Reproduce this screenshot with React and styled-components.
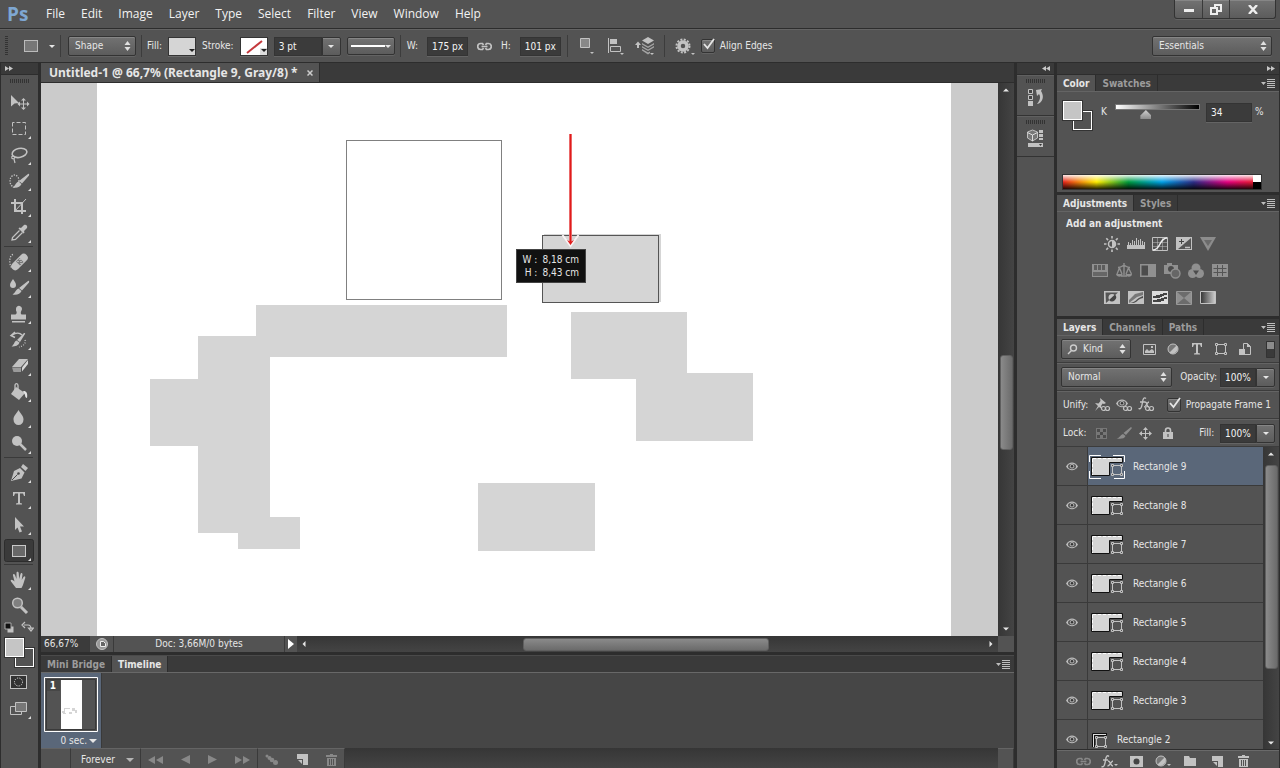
import React, { useState } from 'react';
import styled, { createGlobalStyle, css } from 'styled-components';

const GlobalStyle = createGlobalStyle`
  * {
    box-sizing: border-box;
  }

  body {
    margin: 0;
    background: #535353;
    overflow: hidden;
  }

  body, button, input, select {
    font-family: "DejaVu Sans Condensed", "Noto Sans", sans-serif;
    font-size: 10px;
    line-height: 14px;
    color: #e6e6e6;
  }

  button, input, select {
    margin: 0;
    padding: 0;
    border: 0;
    background: none;
    outline: none;
  }

  svg {
    display: block;
    flex: none;
  }
`;

const raised = css`
  background: linear-gradient(#727272, #5c5c5c);
  border: 1px solid #333;
  border-radius: 2px;
  box-shadow: inset 0 1px 0 #868686, 0 1px 0 #636363;
`;

/* ---------- shell ---------- */

const Shell = styled.div`
  display: flex;
  flex-direction: column;
  height: 100vh;
  background: #535353;
`;

const MenuBar = styled.header`
  display: flex;
  align-items: center;
  flex: none;
  height: 29px;
  padding: 0 4px 0 7px;
  border-bottom: 1px solid #2d2d2d;
`;

const Logo = styled.span`
  width: 31px;
  font-family: "Open Sans", sans-serif;
  font-size: 19px;
  line-height: 26px;
  font-weight: 700;
  color: #7ea7d2;
`;

const Menu = styled.nav`
  display: flex;
  flex: 1;
`;

const MenuItem = styled.button`
  padding: 0 8px 1px;
  font-family: "Open Sans", sans-serif;
  font-size: 12px;
  line-height: 18px;
  color: #f2f2f2;
`;

const WindowButtons = styled.div`
  display: flex;
  align-self: flex-start;
  height: 19px;
  ${raised}
  border-top: 0;
  border-radius: 0 0 3px 3px;
`;

const WindowButton = styled.button`
  display: flex;
  align-items: center;
  justify-content: center;
  width: ${props => props.$wide ? 46 : 27}px;
  height: 18px;

  & + & {
    border-left: 1px solid #3a3a3a;
  }
`;

const OptionsBar = styled.div`
  display: flex;
  align-items: center;
  flex: none;
  height: 34px;
  padding: 0 8px 0 5px;
  border-top: 1px solid #646464;
  border-bottom: 1px solid #2d2d2d;
`;

const Group = styled.div`
  display: flex;
  align-items: center;
  gap: ${props => props.$gap || 7}px;
  height: 22px;
  padding: 0 ${props => props.$pad || 5}px 0 ${props => props.$pad || 7}px;

  & + & {
    border-left: 1px solid #3c3c3c;
  }
`;

const Spacer = styled.div`
  flex: 1;
`;

const Label = styled.label`
  color: #e6e6e6;
  white-space: nowrap;
`;

const SelectBox = styled.span`
  position: relative;
  display: inline-flex;
  align-items: center;
  width: ${props => props.$width}px;
  height: 20px;
  ${raised}

  select {
    appearance: none;
    width: 100%;
    height: 18px;
    padding-left: ${props => props.$indent || 6}px;
  }

  option {
    background: #535353;
  }

  svg {
    position: absolute;
    right: 4px;
    pointer-events: none;
  }

  svg.lead {
    right: auto;
    left: 5px;
  }
`;

const Field = styled.input`
  width: ${props => props.$width}px;
  height: 19px;
  padding: 0 0 0 4px;
  border: 1px solid #343434;
  background: #3b3b3b;
  box-shadow: 0 1px 0 #646464;
  color: #f4f4f4;
`;

const Combo = styled.span`
  display: flex;
`;

const ArrowButton = styled.button`
  display: flex;
  align-items: center;
  justify-content: center;
  width: 19px;
  height: 19px;
  ${raised}
  border-radius: 0 2px 2px 0;
`;

const IconButton = styled.button`
  display: flex;
  align-items: center;
  justify-content: center;
  width: ${props => props.$width || 24}px;
  height: 20px;
`;

const PaintWell = styled.button`
  display: flex;
  width: 28px;
  height: 19px;
  border: 1px solid #343434;
  background: ${props => props.$color};
  box-shadow: 0 1px 0 #6a6a6a;
`;

const LineWell = styled.button`
  display: flex;
  align-items: center;
  justify-content: space-between;
  width: 48px;
  height: 18px;
  padding: 0 3px;
  ${raised}
`;

const CheckLabel = styled.label`
  display: flex;
  align-items: center;
  gap: 5px;
  white-space: nowrap;
`;

const CheckInput = styled.input`
  appearance: none;
  width: 14px;
  height: 14px;
  ${raised}
`;

const CheckWrap = styled.span`
  position: relative;
  display: flex;

  svg {
    position: absolute;
    left: 1px;
    top: -2px;
    pointer-events: none;
  }
`;

const Workspace = styled.main`
  display: flex;
  flex: 1;
  min-height: 0;
  background: #2d2d2d;
`;

/* ---------- tools ---------- */

const ToolColumn = styled.aside`
  display: flex;
  flex-direction: column;
  flex: none;
  width: 38px;
  margin-right: 3px;
  border-left: 1px solid #2d2d2d;
  background: #535353;
`;

const DockHeader = styled.div`
  display: flex;
  align-items: center;
  justify-content: ${props => props.$end ? 'flex-end' : 'flex-start'};
  flex: none;
  height: 12px;
  padding: 0 4px;
  border-bottom: 1px solid #2d2d2d;
  background: #3a3a3a;
`;

const Grip = styled.div`
  flex: none;
  width: 20px;
  height: 4px;
  margin: 4px auto 6px;
  background: repeating-linear-gradient(90deg, #333 0 1px, transparent 1px 2px);
`;

const Tools = styled.div`
  display: flex;
  flex-direction: column;
  padding: 0 3px;
`;

const ToolButton = styled.button`
  display: block;
  width: 30px;
  height: 26px;
`;

const ToolRule = styled.hr`
  width: 29px;
  height: 1px;
  margin: 1px 0;
  border: 0;
  background: #3a3a3a;
`;

const ToolColors = styled.div`
  padding: 2px 0 1px;
`;

const SwatchPair = styled.div`
  position: relative;
  width: 30px;
  height: 30px;
`;

const Chip = styled.button`
  position: absolute;
  width: 19px;
  height: 19px;
  border: 1px solid #fff;
  outline: 1px solid #333;
  background: ${props => props.$color};

  ${props => props.$front ? css`
    left: 1px;
    top: 1px;
    z-index: 1;
  ` : css`
    right: 0;
    bottom: 0;
  `}
`;

/* ---------- document ---------- */

const Center = styled.section`
  display: flex;
  flex-direction: column;
  flex: 1;
  min-width: 0;
`;

const DocTabs = styled.div`
  display: flex;
  flex: none;
  height: 20px;
  border-bottom: 1px solid #2d2d2d;
  background: #3a3a3a;
`;

const DocTab = styled.div`
  display: flex;
  align-items: center;
  gap: 9px;
  padding: 0 6px 0 8px;
  border-right: 1px solid #2d2d2d;
  background: #535353;
  font-family: "Noto Sans", sans-serif;
  font-size: 12px;
  font-weight: 700;
  white-space: nowrap;
`;

const CanvasRow = styled.div`
  display: flex;
  flex: 1;
  min-height: 0;
`;

const Pasteboard = styled.div`
  display: flex;
  flex: 1;
  min-width: 0;
  padding: 0 47px 0 56px;
  background: #cbcbcb;
`;

const Page = styled.div`
  position: relative;
  flex: 1;
  min-width: 0;
  overflow: hidden;
  background: #fff;
`;

const SizeTip = styled.div`
  position: absolute;
  left: 419px;
  top: 166px;
  display: grid;
  grid-template-columns: auto auto;
  column-gap: 5px;
  justify-content: end;
  justify-items: end;
  width: 70px;
  height: 34px;
  padding: 3px 6px;
  border: 1px solid #444;
  background: #111;
  line-height: 13px;
  white-space: nowrap;
`;

const ScrollBar = styled.div`
  display: flex;
  flex: none;
  align-items: center;
  flex-direction: ${props => props.$horizontal ? 'row' : 'column'};
  background: linear-gradient(${props => props.$horizontal ? '180deg' : '90deg'}, #363636, #444);
  ${props => props.$horizontal ? css`flex: 1;` : css`width: 16px;`}
`;

const ScrollArrow = styled.button`
  display: flex;
  align-items: center;
  justify-content: center;
  flex: none;
  width: 14px;
  height: 14px;
`;

const Track = styled.div`
  display: grid;
  flex: 1;
  ${props => props.$horizontal ? css`
    height: 13px;
    grid-template-columns: ${props.$parts.map(p => `${p}fr`).join(' ')};
  ` : css`
    width: 13px;
    grid-template-rows: ${props.$parts.map(p => `${p}fr`).join(' ')};
  `}
`;

const Thumb = styled.span`
  border: 1px solid #5f5f5f;
  border-radius: 3px;
  background: linear-gradient(${props => props.$horizontal ? '180deg' : '90deg'}, #8a8a8a, #6b6b6b);
`;

const StatusBar = styled.footer`
  display: flex;
  flex: none;
  height: 17px;
  border-bottom: 1px solid #2d2d2d;
  background: #535353;
`;

const ZoomField = styled.input`
  width: 48px;
  padding-left: 3px;
  background: #3b3b3b;
`;

const StatusCell = styled.div`
  display: flex;
  align-items: center;
  justify-content: center;
  width: ${props => props.$width}px;
  border-left: 1px solid #3a3a3a;
`;

const Corner = styled.div`
  width: 16px;
`;

/* ---------- panels ---------- */

const Tabs = styled.div`
  display: flex;
  flex: none;
  align-items: stretch;
  height: 16px;
  background: #3a3a3a;
`;

const Tab = styled.button`
  padding: 1px 6px 0;
  border-right: 1px solid #2d2d2d;
  background: ${props => props.$active ? '#535353' : 'transparent'};
  color: ${props => props.$active ? '#e6e6e6' : '#9c9c9c'};
  font-weight: 700;
  white-space: nowrap;
`;

const PanelMenu = styled.button`
  display: flex;
  align-items: center;
  margin-left: auto;
  padding-right: 4px;
`;

const TimelinePanel = styled.section`
  flex: none;
  margin-top: 2px;
  border-top: 1px solid #4a4a4a;
  background: #464646;
`;

const Frames = styled.div`
  display: flex;
  height: 76px;
  border-top: 1px solid #686868;
`;

const Frame = styled.div`
  display: flex;
  flex-direction: column;
  align-items: center;
  width: 61px;
  padding-top: 4px;
  border-right: 1px solid #3a3a3a;
  background: #5a6779;
`;

const FrameDelay = styled.button`
  display: flex;
  align-items: center;
  align-self: flex-end;
  gap: 2px;
  margin: 2px 4px 0 0;
`;

const TimelineControls = styled.div`
  display: flex;
  height: 20px;
  background: linear-gradient(#363636, #444);
`;

const ControlGroup = styled.div`
  display: flex;
  align-items: center;
  justify-content: space-between;
  width: ${props => props.$width}px;
  padding: 2px 7px 0;
  border-right: 1px solid #3a3a3a;
  border-top: 1px solid #646464;
  background: #535353;
`;

const LoopSelect = styled.span`
  position: relative;
  display: flex;
  align-items: center;

  select {
    appearance: none;
    width: 56px;
    padding-left: 3px;
  }

  svg {
    position: absolute;
    right: 0;
    pointer-events: none;
  }
`;

const Docks = styled.div`
  display: grid;
  grid-template-columns: 37px 222px;
  grid-template-rows: 12px minmax(0, 1fr);
  column-gap: 3px;
  flex: none;
  margin: 0 1px 0 3px;
`;

const IconDock = styled.div`
  background: #535353;
`;

const IconDockItem = styled.div`
  display: flex;
  flex-direction: column;
  align-items: center;
  height: 41px;
  border-bottom: 1px solid #333;
  border-top: 1px solid #606060;

  ${Grip} {
    margin: 3px auto 5px;
  }
`;

const PanelStack = styled.div`
  display: flex;
  flex-direction: column;
  gap: 3px;
  min-height: 0;
`;

const Panel = styled.section`
  display: flex;
  flex-direction: column;
  min-height: 0;
  flex: ${props => props.$grow ? 1 : 'none'};
  background: #535353;
`;

const ColorBody = styled.div`
  display: flex;
  flex-direction: column;
  justify-content: space-between;
  height: 101px;
  padding: 8px 14px 2px 5px;
  border-top: 1px solid #646464;
`;

const ColorRow = styled.div`
  display: flex;
  align-items: flex-start;
`;

const ColorControls = styled.div`
  display: flex;
  align-items: center;
  height: 24px;
`;

const SliderLabel = styled.label`
  margin: 0 8px 0 9px;
`;

const Slider = styled.input`
  appearance: none;
  width: 85px;
  height: 16px;
  margin: 0 6px 0 0;

  &::-webkit-slider-runnable-track {
    height: 6px;
    margin-bottom: 10px;
    border: 1px solid #777;
    background: linear-gradient(90deg, #fff, #000);
  }

  &::-webkit-slider-thumb {
    appearance: none;
    width: 11px;
    height: 9px;
    margin-top: 5px;
    background: linear-gradient(#d0d0d0, #8c8c8c);
    clip-path: polygon(50% 0, 100% 60%, 100% 100%, 0 100%, 0 60%);
  }
`;

const Percent = styled.span`
  margin-left: 3px;
`;

const Spectrum = styled.div`
  display: flex;
  height: 16px;
  margin-right: 3px;
  border: 1px solid #333;
  background:
    linear-gradient(rgba(255, 255, 255, 0.9), transparent 50%, rgba(0, 0, 0, 0.85)),
    linear-gradient(90deg, #e5231b, #ffed00 17%, #009a3d 33%, #00a0e6 50%, #2d2e87 66%, #e4007f 83%, #e5231b);
`;

const SpectrumEnds = styled.span`
  width: 8px;
  margin-left: auto;
  background: linear-gradient(#fff 50%, #000 50%);
`;

const AdjustBody = styled.div`
  height: 105px;
  padding: 6px 9px 0;
  border-top: 1px solid #646464;
`;

const AdjustTitle = styled.h2`
  margin: 0;
  font-size: 10px;
  line-height: 12px;
  font-weight: 700;
`;

const AdjustRow = styled.div`
  display: flex;
  justify-content: center;
  height: 27px;
  padding-right: 16px;
  opacity: ${props => props.$dim ? 0.55 : 1};
`;

const AdjustButton = styled.button`
  display: flex;
  align-items: center;
  justify-content: center;
  width: 24px;
`;

const LayerRow = styled.div`
  display: flex;
  align-items: center;
  flex: none;
  height: 28px;
  padding: 0 4px;
  border-top: 1px solid #646464;
  border-bottom: 1px solid #3c3c3c;

  > ${Label}:first-child {
    margin-left: 2px;
  }
`;

const RowIcons = styled.div`
  display: flex;
  align-items: center;
  margin-left: ${props => props.$offset || 0}px;
`;

const LayerArea = styled.div`
  display: flex;
  flex: 1;
  min-height: 0;
`;

const LayerList = styled.ul`
  flex: 1;
  margin: 0;
  padding: 0;
  overflow: hidden;
  list-style: none;
`;

const Layer = styled.li`
  display: flex;
  height: 39px;
  border-bottom: 1px solid #3a3a3a;
`;

const EyeButton = styled.button`
  display: flex;
  align-items: center;
  justify-content: center;
  width: 31px;
  border-right: 1px solid #3a3a3a;
`;

const LayerName = styled.button`
  display: flex;
  align-items: center;
  flex: 1;
  gap: 8px;
  padding: 2px 0 0 1px;
  background: ${props => props.$selected ? '#5a6779' : 'transparent'};
`;

const PanelFooter = styled.div`
  display: flex;
  align-items: center;
  flex: none;
  height: 18px;
  padding: 3px 23px 0 14px;
  justify-content: space-between;
  border-top: 1px solid #6a6a6a;
  box-shadow: 0 -1px 0 #2d2d2d;
`;

/* ---------- icons ---------- */

const INK = '#c2c2c2';

const Icon = ({ w = 16, h = 16, children, ...rest }) => (
  <svg width={w} height={h} viewBox={`0 0 ${w} ${h}`} fill={INK} aria-hidden="true" {...rest}>{children}</svg>
);

const Down = ({ size = 6, color = '#e6e6e6' }) => (
  <svg width={size} height={size / 2} viewBox="0 0 6 3" fill={color} aria-hidden="true"><path d="M0 0h6L3 3z" /></svg>
);

const UpDown = () => (
  <Icon w={7} h={10} fill="#e0e0e0"><path d="M3.500 0L6.500 4H.5zM.5 6h6l-3 4z" /></Icon>
);

const Double = ({ left }) => (
  <Icon w={8} h={7} fill="#c8c8c8">
    {left ? <path d="M4 1v5L0 3.500zM8 1v5L4 3.500z" /> : <path d="M0 1l4 2.500L0 6zM4 1l4 2.500L4 6z" />}
  </Icon>
);

const ListMenu = () => (
  <Icon w={14} h={9} fill="#bdbdbd">
    <path d="M0 3h5L2.500 6zM6 0h8v1H6zM6 2h8v1H6zM6 4h8v1H6zM6 6h8v1H6zM6 8h8v1H6z" />
  </Icon>
);

const Tick = () => (
  <Icon w={14} h={14}><path d="M2 7l3.500 4L12 2" fill="none" stroke="#e6e6e6" strokeWidth="1.800" /></Icon>
);

const ChainIcon = ({ color = INK }) => (
  <Icon w={15} h={9} fill="none" stroke={color} strokeWidth="1.700">
    <path d="M6.500 3L5.500 1.500H3.500a2.500 2.700 0 0 0 0 6h2l1-1.500M8.500 3L9.500 1.500h2a2.500 2.700 0 0 1 0 6h-2l-1-1.500M4.500 4.500h6" />
  </Icon>
);

const brush = <path d="M25 6c1-.5 1.500.5 1 1.500l-7 8-3-2.500zM15.500 13.500l3 2.500c-1 3-5 4.500-9 3.500 3-1.500 3-5 6-6z" />;

const toolIcons = {
  move: <path d="M7 6l8 8-4.500.5L7 17.500zM19.500 9l2.500 2.500h-2v3h3v-2l2.500 2.500-2.500 2.500v-2h-3v3h2L19.500 21 17 18.500h2v-3h-3v2L13.500 15l2.500-2.500v2h3v-3h-2z" />,
  marquee: <rect x="8.500" y="7.500" width="13" height="12" fill="none" stroke={INK} strokeDasharray="4 2" strokeDashoffset="2" />,
  lasso: <g fill="none" stroke={INK} strokeWidth="1.600"><ellipse cx="15.500" cy="12" rx="7.500" ry="4.500" transform="rotate(-12 15 12)" /><path d="M9 14.500c-2.500 1.500-1 4 1 3s0-3-1.500-2M10 18l1 4" strokeWidth="1.200" /></g>,
  quick: <g transform="translate(-1 1)"><ellipse cx="11.500" cy="13" rx="4.500" ry="6" fill="none" stroke={INK} strokeWidth="1.300" strokeDasharray="1.300 1.300" />{brush}</g>,
  crop: <g fill="none" stroke={INK} strokeWidth="2"><path d="M11 6v12h11M7 10h11v11" /><path d="M11 18L22 6" strokeWidth="1" /></g>,
  dropper: <g><path d="M20 6c2-1 4 1 3 3l-3 3 .5 1.500-1 1-5-5 1-1 1.500.5z" /><path d="M15.500 11.500l-7 7L8 21l3.500-.5 7-7" fill="none" stroke={INK} strokeWidth="1.300" /></g>,
  heal: <g transform="translate(-1 1)"><path d="M10 5.500c-4 1-4 10-1.500 13" fill="none" stroke={INK} strokeWidth="1.300" strokeDasharray="1.300 1.300" /><rect x="6.500" y="9" width="20" height="8" rx="4" transform="rotate(-45 16.500 13)" /><path d="M13 12.500l3.500-3.500 4 4-3.500 3.500z" fill="#777" /><path d="M14.500 12.500h1m1-2h1m0 4h1m-1-2h1" stroke="#eee" /></g>,
  mixer: <g transform="translate(-1 1)"><path d="M10 4c2 3 3 4 3 6a3 3 0 0 1-6 0c0-2 1-3 3-6z" />{brush}</g>,
  stamp: <path d="M12 9a3 3 0 1 1 5.500 1.500c-1 2-1 3 0 4H22v5H7v-5h4.500c1.500-1 1.500-2 .5-4zM8 21h13v1.500H8z" />,
  history: <g transform="translate(-1 1)"><path d="M9 8c4-2.500 8-2 10 0M12 5L8 8.500l4 2" fill="none" stroke={INK} strokeWidth="1.500" /><path d="M21 6c1 0 1.500 0 1 1l-5 8-3-2zM13.500 13.500l3 2c-1 3-4 4-8 4 3-2 2.500-5 5-6z" /><path d="M22 13c1 3-1 6-6 7" fill="none" stroke={INK} strokeDasharray="1 1.500" strokeWidth="1.300" /></g>,
  eraser: <g transform="translate(0 1)"><path d="M15 6h9l-7 8H8z" /><path d="M8 14.500h9V19H9.500z" fill="#9a9a9a" /><path d="M18 14.500L24 7v4l-6 7.500z" fill="#d8d8d8" /></g>,
  bucket: <g transform="translate(-1 1)"><path d="M13 8l9 6-6 7-8-6z" /><path d="M12 13V6.500c0-2.500 3-2.500 3 0V13" fill="none" stroke={INK} strokeWidth="1.300" /><path d="M20 12c3-.5 5 2 4 7-1 0-2-1-2-3z" fill="#e2e2e2" /></g>,
  blur: <path d="M14.500 6c3 5 5 6 5 9.500a5 5.500 0 0 1-10 0c0-3.500 2-4.500 5-9.500z" />,
  dodge: <g><circle cx="13" cy="11" r="5" /><path d="M16 14l6 6" stroke={INK} strokeWidth="2.500" /></g>,
  pen: <g transform="translate(0 1)"><path d="M7 21l3-10 6-3 4.500 4.500-3 6z" /><path d="M17 7l2-3 5 4-2.500 3z" /><path d="M8 20l5.500-5.500" stroke="#4a4a4a" /><circle cx="14.500" cy="13.500" r="1.300" fill="#4a4a4a" /></g>,
  type: <path d="M9 7h12v4h-1l-1-2.500h-3V18l2 .5v1h-6v-1l2-.5V8.500h-3L10 11H9z" />,
  pick: <path d="M11 6l9 9.500h-4l2 5-2.500 1-2-5L11 19z" />,
  rect: <g><rect x=".5" y="2.500" width="29" height="22" rx="2" fill="#3a3a3a" stroke="#2d2d2d" /><rect x="8.500" y="8.500" width="13" height="11" fill="#686868" stroke="#c9c9c9" /></g>,
  hand: <path d="M12 22l-5-6.500c-1-1.500.5-2.500 2-1.200l1.500 1.200-1.500-6c-.4-1.800 1.400-2.200 2-.5l1.500 4V7c0-1.800 2-1.800 2.200 0l.5 6 1.300-5c.4-1.700 2.200-1.200 2 .5l-.8 5.500 1.800-3c1-1.500 2.200-.6 1.700 1L19 19l-1.500 3z" />,
  zoom: <g><circle cx="13.500" cy="11" r="4.800" fill="#808080" stroke={INK} strokeWidth="1.500" /><path d="M17 15l6 6" stroke={INK} strokeWidth="3" /></g>
};

const toolGroups = [
  ['move', 'marquee', 'lasso', 'quick', 'crop', 'dropper'],
  ['heal', 'mixer', 'stamp', 'history', 'eraser', 'bucket', 'blur', 'dodge'],
  ['pen', 'type', 'pick', 'rect'],
  ['hand', 'zoom']
];

const adjustIcons = [
  [
    ['Brightness', <g><circle cx="8" cy="8" r="3.500" fill="none" stroke={INK} strokeWidth="1.500" /><path d="M8 4.500a3.500 3.500 0 0 1 0 7z" /><path d="M8 0v2.500M8 13.500V16M0 8h2.500M13.500 8H16M2.300 2.300l1.800 1.800M11.900 11.900l1.800 1.800M2.300 13.700l1.800-1.800M11.900 4.100l1.800-1.800" stroke={INK} strokeWidth="1.600" /></g>],
    ['Levels', <path d="M0 9h18v4H0zM1 6h1v3H1zM3 7h1v2H3zM5 4h1v5H5zM7 5h1v4H7zM9 2h1v7H9zM11 4h1v5h-1zM13 3h1v6h-1zM15 5h1v4h-1zM17 6h1v3h-1z" />, 18],
    ['Curves', <g fill="none" stroke={INK}><path d="M.5 1.500h15v13H.5z" /><path d="M5.500 1.500v13M10.500 1.500v13M.5 6.500h15M.5 10.500h15" opacity=".5" /><path d="M1 14c8 0 6-12 14-12" strokeWidth="1.500" stroke="#eee" /></g>],
    ['Exposure', <g><path d="M0 1h16v13H0z" /><path d="M15 2v11H2z" fill="#555" /><path d="M3 5.500h5M5.500 3v5" stroke="#444" /><path d="M9 11.500h5" stroke={INK} strokeWidth="1.500" /></g>],
    ['Vibrance', <g><path d="M0 1h16L8 15z" fill="#8c8c8c" /><path d="M4 4h8l-4 6z" fill="#6a6a6a" /></g>]
  ],
  [
    ['Hue', <g><path d="M0 1h16v13H0z" /><path d="M2 2h3v5H2zM6 2h3v5H6zM10 2h3v5h-3z" fill="#666" /><path d="M1 9h14v4H1z" fill="#777" /></g>],
    ['Color Balance', <g fill="none" stroke={INK} strokeWidth="1.400"><path d="M2 4.500c4 0 4-2 6-2s2 2 6 2M8 0v12M5 13h6M3.500 5L1 11M3.500 5L6 11M12.500 5L10 11M12.500 5l3 6" /><path d="M0 11h6.500c0 3.500-6 3.500-6.500 0zM9.500 11H16c0 3.500-6 3.500-6.500 0z" fill={INK} stroke="none" /></g>],
    ['Black and White', <g><path d="M0 1h16v13H0z" /><path d="M1.500 2.500H8v10H1.500z" fill="#484848" /></g>],
    ['Photo Filter', <g><path d="M0 2h3V0h5v2h6v9H0z" /><circle cx="7" cy="6" r="3" fill="#484848" /><circle cx="11.500" cy="10.500" r="4.500" fill="#777" stroke={INK} strokeWidth="1.400" /></g>, 17],
    ['Channel Mixer', <g><circle cx="8" cy="5" r="4.500" /><circle cx="4.500" cy="10.500" r="4.500" /><circle cx="11.500" cy="10.500" r="4.500" /><path d="M5 7.500h6L8 12z" fill="#484848" /></g>],
    ['Color Lookup', <g><path d="M0 1h16v13H0z" /><path d="M1.500 5.500h13M1.500 9.500h13M5.500 2v11M10.500 2v11" stroke="#555" /></g>]
  ],
  [
    ['Invert', <g><path d="M0 1h16v13H0z" /><path d="M1.500 2.500H14L2 13z" fill="#555" /><circle cx="8" cy="7.500" r="3.500" /><path d="M5 10l6-5.500a4 4 0 0 1-6 5.500z" fill="#444" /></g>],
    ['Posterize', <g><path d="M0 1h16v13H0z" /><path d="M1 10l6-6 8-2v3L9 7l-8 6z" fill="#777" /><path d="M1 13c7 0 6-4 14-7v2c-6 1-6 5-10 5z" fill="#4c4c4c" /></g>],
    ['Threshold', <g><path d="M0 1h16v13H0z" fill="#dedede" /><path d="M1 8V6h3V5h4V4h3V3h4v2h-3v1h-2v1H8v1zM1 12v-2h4V9h4V8h3V7h3v2h-3v2H9v1z" fill="#444" /></g>],
    ['Selective Color', <g><path d="M.5 1.500h15v13H.5z" fill="#6c6c6c" stroke="#999" /><path d="M1 2l7 6-7 6z" fill="#909090" /><path d="M15 2L8 8l7 6z" fill="#909090" /></g>],
    ['Gradient Map', <g><defs><linearGradient id="gm"><stop stopColor="#333" /><stop offset="1" stopColor="#d0d0d0" /></linearGradient></defs><path d="M.5 1.500h15v12H.5z" fill="url(#gm)" stroke={INK} /></g>]
  ]
];

const TypeGlyph = () => (
  <Icon w={12} h={12}><path d="M1 0h10v4h-1L9 1.500H7V10l2 .5v1H3v-1l2-.5V1.500H3L2 4H1z" /></Icon>
);

const shapeArt = (
  <g fill="none" stroke={INK}>
    <path d="M1.500 1.500h9v9h-9z" />
    <path d="M.5.500h2v2h-2zM9.500.500h2v2h-2zM.5 9.500h2v2h-2zM9.500 9.500h2v2h-2z" fill="#535353" />
  </g>
);

const ShapeGlyph = () => <Icon w={12} h={12}>{shapeArt}</Icon>;

const HalfCircle = () => (
  <Icon w={12} h={12}><circle cx="6" cy="6" r="5" fill="#777" stroke={INK} /><path d="M9.500 2.500a5 5 0 0 1-7 7z" /></Icon>
);

const eyeArt = (
  <g>
    <path d="M0 4.500C3-1 9-1 12 4.500 9 9.500 3 9.500 0 4.500z" fill="#bdbdbd" />
    <ellipse cx="6" cy="4.500" rx="4" ry="2.700" fill="#555" />
    <circle cx="6" cy="4.300" r="2.200" fill="#b0b0b0" />
    <circle cx="6" cy="4.300" r="1.200" fill="#333" />
  </g>
);

const Eye = () => <Icon w={12} h={9}>{eyeArt}</Icon>;

const Fx = () => (
  <Icon w={13} h={13} fill="none" stroke={INK} strokeWidth="1.400">
    <path d="M8 1.500C6-.5 5 2 4.500 5s-1 8-4 6.500M2 5h5M7 6c3 0 2 5 5 5M12 6c-2 0-3 5-5.500 5" />
  </Icon>
);

const MiniChain = () => (
  <g fill="none" stroke={INK} strokeWidth="1.200"><rect x="7.500" y="9.500" width="4" height="4" rx="2" /><rect x="11.500" y="9.500" width="4" height="4" rx="2" /></g>
);

const Trash = ({ color = INK }) => (
  <Icon w={11} h={12} fill={color}><path d="M4 0h3v1h4v2H0V1h4zM1 4h9v8H1z" /><path d="M3.500 5v6M5.500 5v6M7.500 5v6" stroke="#535353" /></Icon>
);

const NewPage = () => (
  <Icon w={11} h={11}><path d="M0 0h11v11H6V5H0z" /><path d="M1 6h4v4z" /></Icon>
);

const Vertical = ({ up }) => (
  <Icon w={6} h={4} fill="#e6e6e6"><path d={up ? 'M0 3.500h6L3 .5z' : 'M0 .5h6L3 3.500z'} /></Icon>
);

const Sideways = ({ left }) => (
  <Icon w={4} h={6} fill="#e6e6e6"><path d={left ? 'M3.500 0v6L.5 3z' : 'M.5 0v6L3.500 3z'} /></Icon>
);

const LayerThumb = ({ small, selected }) => small ? (
  <Icon w={20} h={18}>
    <path d="M3.500 16V2.500H18" fill="none" stroke="#111" />
    <path d="M5 3.500h13M4.500 3v13" stroke="#ddd" />
    <path d="M17.500 2v2.500H5.500V16" fill="none" stroke="#111" />
    <g transform="translate(6 5)">{shapeArt}</g>
  </Icon>
) : (
  <Icon w={36} h={26}>
    <path d="M2.500 3.500h31v5h-13v13h-18z" fill="#d5d5d5" stroke="#111" />
    <path d="M4 4.500h29M3.500 5v16" stroke="#fff" strokeDasharray="3 2" />
    <g transform="translate(22 10)">{shapeArt}</g>
    {selected && <path d="M12 1.500H.5V8M24 1.500h11.500V8M.5 17v7.500H12M35.500 17v7.500H25" fill="none" stroke="#fff" />}
  </Icon>
);

const layers = [9, 8, 7, 6, 5, 4, 3, 2];
const menus = ['File', 'Edit', 'Image', 'Layer', 'Type', 'Select', 'Filter', 'View', 'Window', 'Help'];

/* ---------- parts ---------- */

const CheckBox = ({ id, children }) => {
  const [on, setOn] = useState(true);
  return (
    <CheckLabel htmlFor={id}>
      <CheckWrap>
        <CheckInput id={id} type="checkbox" checked={on} onChange={() => setOn(!on)} />
        {on && <Tick />}
      </CheckWrap>
      {children}
    </CheckLabel>
  );
};

const Scroller = ({ horizontal, parts }) => (
  <ScrollBar $horizontal={horizontal}>
    <ScrollArrow aria-label="Scroll back">{horizontal ? <Sideways left /> : <Vertical up />}</ScrollArrow>
    <Track $horizontal={horizontal} $parts={parts}>
      <span />
      <Thumb $horizontal={horizontal} />
    </Track>
    <ScrollArrow aria-label="Scroll forward">{horizontal ? <Sideways /> : <Vertical />}</ScrollArrow>
  </ScrollBar>
);

const Options = () => (
  <OptionsBar>
    <Icon w={4} h={20}><path d="M1.500 0v20" stroke="#333" strokeWidth="3" strokeDasharray="1 1" /></Icon>
    <Group $gap={3}>
      <IconButton $width={30} aria-label="Rectangle tool">
        <Icon w={14} h={12}><rect x=".5" y=".5" width="13" height="11" fill="#777" stroke="#bbb" /></Icon>
      </IconButton>
      <Down />
    </Group>
    <Group>
      <SelectBox $width={68}>
        <select aria-label="Tool mode"><option>Shape</option></select>
        <UpDown />
      </SelectBox>
    </Group>
    <Group $gap={6} $pad={5}>
      <Label as="span">Fill:</Label>
      <PaintWell $color="#d5d5d5" aria-label="Fill color">
        <Icon w={26} h={17}><path d="M20 11h6l-3 3z" fill="#222" /></Icon>
      </PaintWell>
      <Label as="span">Stroke:</Label>
      <PaintWell $color="#fff" aria-label="Stroke color">
        <Icon w={26} h={17}><path d="M6 15L21 3" stroke="#c4393d" strokeWidth="2" /><path d="M19 10h7v7h-7z" fill="#ddd" /><path d="M20 11h6l-3 3z" fill="#222" /></Icon>
      </PaintWell>
      <Combo>
        <Field $width={48} defaultValue="3 pt" aria-label="Stroke width" />
        <ArrowButton aria-label="Stroke width presets"><Down /></ArrowButton>
      </Combo>
      <LineWell aria-label="Stroke type">
        <Icon w={34} h={4}><path d="M0 1h34v2H0z" fill="#fff" /></Icon>
        <Down />
      </LineWell>
    </Group>
    <Group $gap={9} $pad={6}>
      <Label htmlFor="width">W:</Label>
      <Field id="width" $width={41} defaultValue="175 px" />
      <ChainIcon />
      <Label htmlFor="height">H:</Label>
      <Field id="height" $width={41} defaultValue="101 px" />
    </Group>
    <Group $gap={5} $pad={7}>
      <IconButton aria-label="Path operations">
        <Icon w={18} h={18}><path d="M2.500 1.500h9v9h-9z" fill="#888" stroke={INK} /><path d="M12 15h4l-2 2z" /></Icon>
      </IconButton>
      <IconButton aria-label="Path alignment">
        <Icon w={18} h={18}><path d="M1 1h1v15H1zM3 2h7v5H3z" /><path d="M3.500 9.500h10v5h-10z" fill="#555" stroke={INK} /><path d="M13 16h4l-2 2z" /></Icon>
      </IconButton>
      <IconButton aria-label="Path arrangement">
        <Icon w={20} h={18}><path d="M2 11V8H0l3-3.500L6 8H4v3z" /><path d="M13 0l6 3.500L13 7 7 3.500z" /><path d="M7 6l6 3.500L19 6v1.500L13 11 7 7.500zM7 9l6 3.500L19 9v1.500L13 14l-6-3.500zM7 12l6 3.500 2-1V16l-2 1.500-6-4z" fill="#a5a5a5" /><path d="M15 16h4l-2 2z" /></Icon>
      </IconButton>
    </Group>
    <Group $gap={3}>
      <IconButton $width={26} aria-label="Options">
        <Icon w={20} h={18}><circle cx="8" cy="9" r="4" fill="none" stroke={INK} strokeWidth="3.500" /><circle cx="8" cy="9" r="6.500" fill="none" stroke={INK} strokeWidth="2" strokeDasharray="2 1.400" /><path d="M16 16h4l-2 2z" /></Icon>
      </IconButton>
      <CheckBox id="align-edges">Align Edges</CheckBox>
    </Group>
    <Spacer />
    <SelectBox $width={120}>
      <select aria-label="Workspace"><option>Essentials</option></select>
      <UpDown />
    </SelectBox>
  </OptionsBar>
);

const ToolBox = () => (
  <ToolColumn>
    <DockHeader><Double /></DockHeader>
    <Grip />
    <Tools>
      {toolGroups.map((group, i) => (
        <React.Fragment key={group[0]}>
          {i > 0 && <ToolRule />}
          {group.map(name => (
            <ToolButton key={name} aria-label={name}>
              <Icon w={30} h={26}>
                {toolIcons[name]}
                {name !== 'move' && name !== 'zoom' && <path d="M27 21v3h-3z" fill="#ddd" />}
              </Icon>
            </ToolButton>
          ))}
        </React.Fragment>
      ))}
      <ToolColors>
        <Icon w={30} h={17}>
          <path d="M3.500 6.500h6v6h-6z" fill={INK} /><path d="M1 3h6v6H1z" fill="#111" stroke="#aaa" />
          <path d="M20 5h4c2 0 3 1 3 4M21 2l-3 3 3 3M24.500 8h5L27 11z" fill="none" stroke={INK} strokeWidth="1.200" />
        </Icon>
        <SwatchPair>
          <Chip $front $color="#c5c5c5" aria-label="Foreground color" />
          <Chip $color="#535353" aria-label="Background color" />
        </SwatchPair>
      </ToolColors>
      <ToolButton aria-label="Quick mask">
        <Icon w={30} h={26}><rect x="6.500" y="7.500" width="16" height="13" fill="#333" stroke={INK} /><circle cx="14.500" cy="14" r="4" fill="none" stroke="#ddd" strokeDasharray="1.200 1.200" /></Icon>
      </ToolButton>
      <ToolButton aria-label="Screen mode">
        <Icon w={30} h={26}><path d="M6.500 12.500h11v8h-11z" fill="#555" stroke={INK} /><path d="M11.500 8.500h11v9h-11z" fill="#777" stroke={INK} /><path d="M27 22v3h-3z" fill="#ddd" /></Icon>
      </ToolButton>
    </Tools>
  </ToolColumn>
);

const Artwork = () => (
  <svg width="854" height="553" viewBox="0 0 854 553" aria-label="Artwork">
    <g fill="#d5d5d5">
      <path d="M159 222h251v52H173v160h30v32h-62v-16h-40v-87H53v-67h48v-43h58z" />
      <path d="M474 229h116v61h66v68H539v-62h-65z" />
      <path d="M381 400h117v68H381z" />
      <path d="M447 151h117v68H447z" />
    </g>
    <rect x="249.500" y="57.500" width="155" height="159" fill="#fff" stroke="#808080" />
    <rect x="445.500" y="152.500" width="116" height="67" fill="#d5d5d5" stroke="#555" />
    <path d="M465.500 152l8 11 8-11" fill="none" stroke="#f8f2f2" strokeWidth="2" />
    <path d="M473.500 51v109" stroke="#f5b5b5" strokeWidth="3" />
    <path d="M473.500 51v108" stroke="#e01b1b" strokeWidth="2" />
    <path d="M470 157l3.500 2 3.500-2-3.500 5z" fill="#e01b1b" />
  </svg>
);

const Timeline = () => (
  <TimelinePanel>
    <Tabs>
      <Tab>Mini Bridge</Tab>
      <Tab $active>Timeline</Tab>
      <PanelMenu aria-label="Timeline menu"><ListMenu /></PanelMenu>
    </Tabs>
    <Frames>
      <Frame>
        <Icon w={54} h={55}>
          <path d="M.5.500h53v54H.5z" fill="#535353" stroke="#fff" />
          <path d="M2.500 2.500h49v50h-49z" fill="none" stroke="#3a3a3a" />
          <path d="M17 3h21v49H17z" fill="#fff" />
          <path d="M20 31h6v1h-5v4h1v1h-3v-1h-1v-2h2zM28 31h3v2h2v3h-2v-2h-3zM25 35h3v2h-3z" fill="#d5d5d5" />
          <path d="M3 3h13v11H3z" fill="#474747" />
          <text x="9" y="12" textAnchor="middle" fontSize="10" fontWeight="700" fill="#fff">1</text>
        </Icon>
        <FrameDelay>0 sec.<Down size={8} /></FrameDelay>
      </Frame>
    </Frames>
    <TimelineControls>
      <ControlGroup $width={30} />
      <ControlGroup $width={70}>
        <LoopSelect>
          <select aria-label="Loop count"><option>Forever</option></select>
          <Down size={8} color="#b5b5b5" />
        </LoopSelect>
      </ControlGroup>
      <ControlGroup $width={117}>
        <button aria-label="First frame"><Icon w={15} h={8} fill="#888"><path d="M7 0v8L0 4zM15 0v8L8 4z" /></Icon></button>
        <button aria-label="Previous frame"><Icon w={9} h={9} fill="#888"><path d="M9 0v9L0 4.500z" /></Icon></button>
        <button aria-label="Play"><Icon w={9} h={9} fill="#888"><path d="M0 0v9l9-4.500z" /></Icon></button>
        <button aria-label="Next frame"><Icon w={15} h={8} fill="#888"><path d="M0 0v8l7-4zM8 0v8l7-4z" /></Icon></button>
      </ControlGroup>
      <ControlGroup $width={87}>
        <button aria-label="Tween"><Icon w={13} h={11} fill="#888"><circle cx="2" cy="2" r="1.500" /><circle cx="4.500" cy="4" r="2" /><circle cx="7" cy="6" r="2.300" /><circle cx="10.500" cy="8.500" r="2.500" /></Icon></button>
        <button aria-label="Duplicate frame"><NewPage /></button>
        <button aria-label="Delete frame"><Trash color="#888" /></button>
      </ControlGroup>
      <Spacer />
      <ControlGroup $width={16} />
    </TimelineControls>
  </TimelinePanel>
);

const ColorPanel = () => (
  <Panel>
    <Tabs>
      <Tab $active>Color</Tab>
      <Tab>Swatches</Tab>
      <PanelMenu aria-label="Color menu"><ListMenu /></PanelMenu>
    </Tabs>
    <ColorBody>
      <ColorRow>
        <SwatchPair>
          <Chip $front $color="#c5c5c5" aria-label="Foreground color" />
          <Chip $color="#535353" aria-label="Background color" />
        </SwatchPair>
        <ColorControls>
          <SliderLabel htmlFor="k">K</SliderLabel>
          <Slider id="k" type="range" min="0" max="100" defaultValue="34" />
          <Field $width={46} defaultValue="34" aria-label="K value" />
          <Percent>%</Percent>
        </ColorControls>
      </ColorRow>
      <Spectrum><SpectrumEnds /></Spectrum>
    </ColorBody>
  </Panel>
);

const AdjustPanel = () => (
  <Panel>
    <Tabs>
      <Tab $active>Adjustments</Tab>
      <Tab>Styles</Tab>
      <PanelMenu aria-label="Adjustments menu"><ListMenu /></PanelMenu>
    </Tabs>
    <AdjustBody>
      <AdjustTitle>Add an adjustment</AdjustTitle>
      {adjustIcons.map((row, i) => (
        <AdjustRow key={i} $dim={i === 1}>
          {row.map(([name, art, w]) => (
            <AdjustButton key={name} aria-label={name}><Icon w={w || 16} h={16}>{art}</Icon></AdjustButton>
          ))}
        </AdjustRow>
      ))}
    </AdjustBody>
  </Panel>
);

const LayersPanel = () => {
  const [selected, setSelected] = useState(9);
  return (
    <Panel $grow>
      <Tabs>
        <Tab $active>Layers</Tab>
        <Tab>Channels</Tab>
        <Tab>Paths</Tab>
        <PanelMenu aria-label="Layers menu"><ListMenu /></PanelMenu>
      </Tabs>
      <LayerRow>
        <SelectBox $width={70} $indent={21}>
          <Icon className="lead" w={11} h={11} fill="none" stroke="#ccc" strokeWidth="1.400"><circle cx="6.500" cy="4" r="3" /><path d="M4.500 6.500L1 10" /></Icon>
          <select aria-label="Filter type"><option>Kind</option></select>
          <UpDown />
        </SelectBox>
        <RowIcons $offset={6}>
          <IconButton aria-label="Pixel layers"><Icon w={13} h={11}><path d="M.5.500h12v10H.5z" fill="#555" stroke={INK} /><path d="M2 9V7l2-2 2 2 3-2 2 2v2zM8 2h2v2H8z" /></Icon></IconButton>
          <IconButton aria-label="Adjustment layers"><HalfCircle /></IconButton>
          <IconButton aria-label="Type layers"><TypeGlyph /></IconButton>
          <IconButton aria-label="Shape layers"><ShapeGlyph /></IconButton>
          <IconButton aria-label="Smart objects"><Icon w={12} h={13}><path d="M4.500.500h4l3 3v8h-7z" fill="#555" stroke={INK} /><path d="M8 0v4h4zM0 6h6v6H0z" /></Icon></IconButton>
        </RowIcons>
        <Spacer />
        <Icon w={9} h={17}><path d="M.5.500h8v16h-8z" fill="#3a3a3a" stroke="#333" /><path d="M1 1h7v7H1z" fill="#8c8c8c" /></Icon>
      </LayerRow>
      <LayerRow>
        <SelectBox $width={111}>
          <select aria-label="Blend mode"><option>Normal</option></select>
          <UpDown />
        </SelectBox>
        <Spacer />
        <Label htmlFor="opacity">Opacity:&nbsp;</Label>
        <Combo>
          <Field id="opacity" $width={36} defaultValue="100%" />
          <ArrowButton aria-label="Opacity slider"><Down /></ArrowButton>
        </Combo>
      </LayerRow>
      <LayerRow>
        <Label as="span">Unify:</Label>
        <RowIcons $offset={3}>
          <IconButton $width={22} aria-label="Unify position"><Icon w={17} h={16}><path d="M6 1l6 5-2 1-1.500-.5L7 9l1 3-3-2-4 4 3-5-3-3 3.500.5L6.500 4z" /><MiniChain /></Icon></IconButton>
          <IconButton $width={22} aria-label="Unify visibility"><Icon w={17} h={16}><g transform="translate(0 2)">{eyeArt}</g><MiniChain /></Icon></IconButton>
          <IconButton $width={22} aria-label="Unify style"><Icon w={17} h={16}><path d="M8 1.500C6-.5 5 2 4.500 5s-1 8-4 6.500M2 5h5M7 5c3 0 1 5 4 5M11 5c-2 0-3 5-5 5" fill="none" stroke={INK} strokeWidth="1.300" /><MiniChain /></Icon></IconButton>
        </RowIcons>
        <Spacer />
        <CheckBox id="propagate">Propagate Frame 1</CheckBox>
        <Icon w={4} h={1} />
      </LayerRow>
      <LayerRow>
        <Label as="span">Lock:</Label>
        <RowIcons $offset={4}>
          <IconButton $width={22} aria-label="Lock pixels"><Icon w={11} h={11}><path d="M0 0h11v11H0z" fill="#777" /><path d="M1 1h3v3H1zM7 1h3v3H7zM4 4h3v3H4zM1 7h3v3H1zM7 7h3v3H7z" fill="#4c4c4c" /></Icon></IconButton>
          <IconButton $width={22} aria-label="Lock painting"><Icon w={16} h={12} fill="#8c8c8c"><path d="M15 0l1 1-6 7-2.500-2zM7 7l2.500 2c-1 3-5 3-9 2.500C4 11 4 8 7 7z" /></Icon></IconButton>
          <IconButton $width={22} aria-label="Lock position"><Icon w={13} h={13}><path d="M6.500 0L9 3H7v3h3V4l3 2.500L10 9V7H7v3h2l-2.500 3L4 10h2V7H3v2L0 6.500 3 4v2h3V3H4z" /></Icon></IconButton>
          <IconButton $width={22} aria-label="Lock all"><Icon w={10} h={12}><path d="M2.500 6V3.500a2.500 2.500 0 0 1 5 0V6" fill="none" stroke={INK} strokeWidth="1.600" /><path d="M0 5h10v7H0z" /><path d="M4.500 7h1v3h-1z" fill="#444" /></Icon></IconButton>
        </RowIcons>
        <Spacer />
        <Label htmlFor="fill">Fill:&nbsp;&nbsp;</Label>
        <Combo>
          <Field id="fill" $width={36} defaultValue="100%" />
          <ArrowButton aria-label="Fill slider"><Down /></ArrowButton>
        </Combo>
      </LayerRow>
      <LayerArea>
        <LayerList>
          {layers.map(n => (
            <Layer key={n}>
              <EyeButton aria-label={`Toggle Rectangle ${n}`}><Eye /></EyeButton>
              <LayerName $selected={n === selected} onClick={() => setSelected(n)}>
                <LayerThumb small={n === 2} selected={n === selected} />
                Rectangle {n}
              </LayerName>
            </Layer>
          ))}
        </LayerList>
        <Scroller parts={[4, 206, 68]} />
      </LayerArea>
      <PanelFooter>
        <IconButton aria-label="Link layers"><ChainIcon color="#888" /></IconButton>
        <IconButton aria-label="Layer style"><Fx /><Icon w={4} h={12}><path d="M0 9h4l-2 2z" /></Icon></IconButton>
        <IconButton aria-label="Add mask"><Icon w={13} h={11}><path d="M0 0h13v11H0z" /><circle cx="6.500" cy="5.500" r="3" fill="#444" /></Icon></IconButton>
        <IconButton aria-label="New adjustment"><HalfCircle /><Icon w={4} h={12}><path d="M0 9h4l-2 2z" /></Icon></IconButton>
        <IconButton aria-label="New group"><Icon w={12} h={10}><path d="M0 0h5l1 2h6v8H0z" /></Icon></IconButton>
        <IconButton aria-label="New layer"><NewPage /></IconButton>
        <IconButton aria-label="Delete layer"><Trash /></IconButton>
      </PanelFooter>
    </Panel>
  );
};

const App = () => (
  <>
    <GlobalStyle />
    <Shell>
      <MenuBar>
        <Logo>Ps</Logo>
        <Menu>
          {menus.map(name => <MenuItem key={name}>{name}</MenuItem>)}
        </Menu>
        <WindowButtons>
          <WindowButton aria-label="Minimize"><Icon w={10} h={8} fill="#eee"><path d="M0 4h10v3H0z" /></Icon></WindowButton>
          <WindowButton aria-label="Restore"><Icon w={12} h={11} fill="none" stroke="#eee" strokeWidth="2"><path d="M5 4V1h6v6H8M1 4h6v6H1z" /></Icon></WindowButton>
          <WindowButton $wide aria-label="Close"><Icon w={10} h={9}><path d="M1 0l8 9M9 0L1 9" stroke="#eee" strokeWidth="2.400" /></Icon></WindowButton>
        </WindowButtons>
      </MenuBar>
      <Options />
      <Workspace>
        <ToolBox />
        <Center>
          <DocTabs>
            <DocTab>
              Untitled-1 @ 66,7% (Rectangle 9, Gray/8) *
              <button aria-label="Close document"><Icon w={6} h={6}><path d="M.5.500l5 5M5.500.500l-5 5" stroke="#ccc" strokeWidth="1.500" /></Icon></button>
            </DocTab>
          </DocTabs>
          <CanvasRow>
            <Pasteboard>
              <Page>
                <Artwork />
                <SizeTip>
                  <span>W :</span><span>8,18 cm</span>
                  <span>H :</span><span>8,43 cm</span>
                </SizeTip>
              </Page>
            </Pasteboard>
            <Scroller parts={[258, 95, 172]} />
          </CanvasRow>
          <StatusBar>
            <ZoomField defaultValue="66,67%" aria-label="Zoom level" />
            <StatusCell $width={24}>
              <Icon w={12} h={12}><circle cx="6" cy="6" r="5.500" fill="#999" stroke={INK} /><path d="M4.500 3.500h3l2 2v3h-5z" fill="#666" stroke="#eee" /></Icon>
            </StatusCell>
            <StatusCell $width={171}>Doc: 3,66M/0 bytes</StatusCell>
            <StatusCell as="button" $width={13} aria-label="Status options"><Icon w={6} h={10} fill="#fff"><path d="M0 0l6 5-6 5z" /></Icon></StatusCell>
            <Scroller horizontal parts={[212, 245, 215]} />
            <Corner />
          </StatusBar>
          <Timeline />
        </Center>
        <Docks>
          <DockHeader $end><Double left /></DockHeader>
          <DockHeader $end><Double /></DockHeader>
          <IconDock>
            <IconDockItem>
              <Grip />
              <Icon w={17} h={19}><path d="M1.500 1.500h4v4h-4zM1.500 7.500h4v4h-4z" fill="#444" stroke={INK} /><path d="M1 13h5v5H1z" /><path d="M9 2l6-1-1 2c4 6 1 12-4 13 3-4 4-7 2-10l-2 2z" /></Icon>
            </IconDockItem>
            <IconDockItem>
              <Grip />
              <Icon w={17} h={19}><path d="M5.500 1l5 2v6l-5 3-5-3V3z" fill="#777" stroke={INK} /><path d="M.5 3.500l5 2.500 5-2.500M5.500 6v6" fill="none" stroke="#ddd" /><path d="M12 1h4v3h-4zM12 5h4v3h-4zM12 9h4v2h-4zM1 14h15v4H1z" /><path d="M12 15h3l-1.500 2z" fill="#333" /></Icon>
            </IconDockItem>
          </IconDock>
          <PanelStack>
            <ColorPanel />
            <AdjustPanel />
            <LayersPanel />
          </PanelStack>
        </Docks>
      </Workspace>
    </Shell>
  </>
);

export default App;
